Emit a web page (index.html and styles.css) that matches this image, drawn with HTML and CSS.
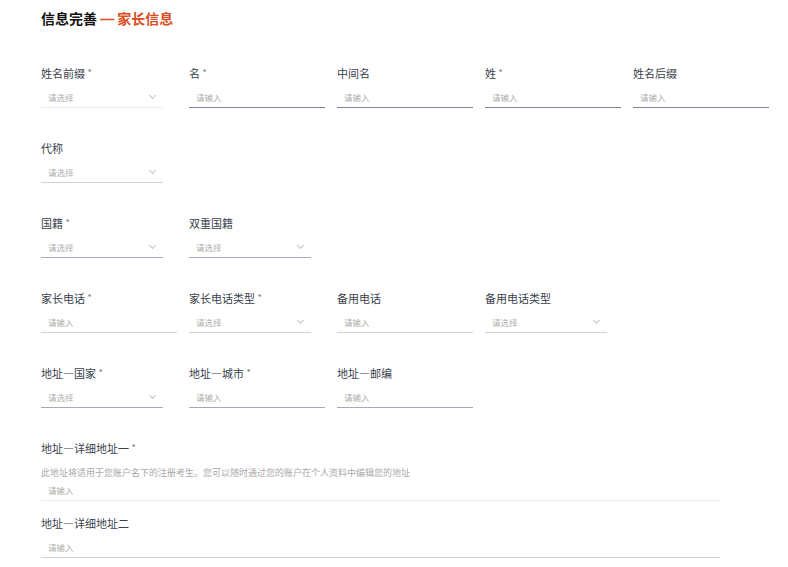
FILE: index.html
```html
<!DOCTYPE html>
<html lang="zh-CN">
<head>
    <meta charset="UTF-8">
    <meta name="viewport" content="width=device-width, initial-scale=1.0">
    <title>信息完善 — 家长信息</title>
    <link rel="stylesheet" href="styles.css">
</head>
<body>
    <div class="page">
        <h1 class="title">信息完善 <span class="title-sub"><b class="dash">—</b> 家长信息</span></h1>

        <div class="row">
            <div class="field select light">
                <div class="label">姓名前缀 <i>*</i></div>
                <div class="control">请选择<span class="arrow"></span></div>
            </div>
            <div class="field dark">
                <div class="label">名 <i>*</i></div>
                <div class="control">请输入</div>
            </div>
            <div class="field dark">
                <div class="label">中间名</div>
                <div class="control">请输入</div>
            </div>
            <div class="field dark">
                <div class="label">姓 <i>*</i></div>
                <div class="control">请输入</div>
            </div>
            <div class="field dark">
                <div class="label">姓名后缀</div>
                <div class="control">请输入</div>
            </div>
        </div>

        <div class="row">
            <div class="field select medium">
                <div class="label">代称</div>
                <div class="control">请选择<span class="arrow"></span></div>
            </div>
        </div>

        <div class="row">
            <div class="field select middark">
                <div class="label">国籍 <i>*</i></div>
                <div class="control">请选择<span class="arrow"></span></div>
            </div>
            <div class="field select middark">
                <div class="label">双重国籍</div>
                <div class="control">请选择<span class="arrow"></span></div>
            </div>
        </div>

        <div class="row">
            <div class="field medium">
                <div class="label">家长电话 <i>*</i></div>
                <div class="control">请输入</div>
            </div>
            <div class="field select medium">
                <div class="label">家长电话类型 <i>*</i></div>
                <div class="control">请选择<span class="arrow"></span></div>
            </div>
            <div class="field medium">
                <div class="label">备用电话</div>
                <div class="control">请输入</div>
            </div>
            <div class="field select medium">
                <div class="label">备用电话类型</div>
                <div class="control">请选择<span class="arrow"></span></div>
            </div>
        </div>

        <div class="row">
            <div class="field select middark">
                <div class="label">地址—国家 <i>*</i></div>
                <div class="control">请选择<span class="arrow"></span></div>
            </div>
            <div class="field middark">
                <div class="label">地址—城市 <i>*</i></div>
                <div class="control">请输入</div>
            </div>
            <div class="field middark">
                <div class="label">地址—邮编</div>
                <div class="control">请输入</div>
            </div>
        </div>

        <div class="field wide light">
            <div class="label">地址—详细地址一 <i>*</i></div>
            <div class="hint">此地址将适用于您账户名下的注册考生。您可以随时通过您的账户在个人资料中编辑您的地址</div>
            <div class="control">请输入</div>
        </div>

        <div class="field wide medium second">
            <div class="label">地址—详细地址二</div>
            <div class="control">请输入</div>
        </div>
    </div>
</body>
</html>
```

FILE: styles.css
```css
/* General Styling */
body {
    margin: 0;
    background: #fff;
    font-family: "Noto Sans CJK SC", "Noto Sans", sans-serif;
    color: #343a46;
}

.page {
    padding: 10px 0 0 41px;
}

.title {
    height: 16px;
    margin: 0 0 39px;
    font-size: 14px;
    line-height: 16px;
    font-weight: 700;
    color: #111;
}

.title-sub {
    color: #db4d24;
}

.dash {
    font-family: "Liberation Sans", sans-serif;
    font-weight: 700;
}

/* Form rows */
.row {
    display: grid;
    grid-template-columns: repeat(5, 136px);
    column-gap: 12px;
    margin-bottom: 32px;
}

.label {
    height: 16px;
    overflow: hidden;
    font-size: 11px;
    line-height: 16px;
    color: #3a3f4c;
    margin-bottom: 5px;
}

.label i {
    position: relative;
    top: -2px;
    font-style: normal;
    color: #777;
    font-size: 9px;
    line-height: 1;
}

.control {
    position: relative;
    box-sizing: border-box;
    height: 22px;
    padding: 1px 0 0 7px;
    line-height: 20px;
    font-size: 8.5px;
    color: #adadad;
    border-bottom: 1px solid #c7cad2;
}

.select .control {
    width: 122px;
}

.arrow {
    position: absolute;
    right: 8px;
    top: 7px;
    width: 4px;
    height: 4px;
    border-right: 1px solid #c4c4c4;
    border-bottom: 1px solid #c4c4c4;
    transform: rotate(45deg);
}

/* underline shades */
.light .control {
    border-bottom-color: #ececee;
}

.medium .control {
    border-bottom-color: #cfd2d9;
}

.middark .control {
    border-bottom-color: #a3a9b7;
}

.dark .control {
    border-bottom-color: #7b8498;
}

/* Detailed address */
.wide {
    width: 679px;
}

.hint {
    height: 14px;
    font-size: 9px;
    line-height: 14px;
    color: #a9a9a9;
    margin: 10px 0 0;
}

.wide .control {
    height: 21px;
    padding-top: 0;
}

.wide.second .control {
    height: 22px;
    padding-top: 1px;
}

.second {
    margin-top: 14px;
}
```
